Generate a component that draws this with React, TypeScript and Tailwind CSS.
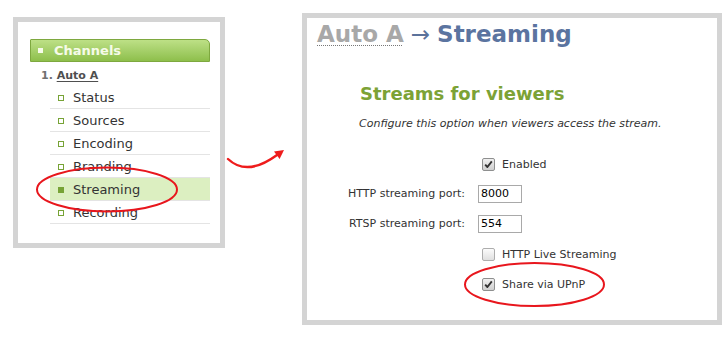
import React from "react";

const font = { fontFamily: '"DejaVu Sans", Verdana, sans-serif' };

const channelItems = ["Status", "Sources", "Encoding", "Branding", "Streaming", "Recording"];

const CheckBox = ({ checked }: { checked: boolean }) => (
  <span
    className={`ml-[4px] mr-[7px] flex h-[13px] w-[13px] items-center justify-center rounded-[2px] border ${
      checked ? "border-[#8e8f8f] bg-gradient-to-b from-[#f0f0f0] to-[#cfcfcf]" : "border-[#adadad] bg-gradient-to-b from-[#fbfbfb] to-[#e0e0e0]"
    }`}
  >
    {checked && (
      <svg width="9" height="9" viewBox="0 0 9 9">
        <path d="M1.2 4.6 L3.4 7 L7.8 1.4" fill="none" stroke="#333" strokeWidth="1.9" strokeLinejoin="round" />
      </svg>
    )}
  </span>
);

const ChannelsPanel = () => (
  <div className="mt-[17px] h-[231px] w-[212px] shrink-0 border-[5px] border-[#d4d4d4] bg-white">
    <div className="ml-[12px] mt-[17px] flex h-[23px] w-[180px] items-center rounded-tr-[5px] rounded-tl-[1px] border border-[#7ea83f] bg-gradient-to-b from-[#bde086] to-[#8ebf4b] pl-[7px]">
      <span className="mr-[11px] h-[5px] w-[5px] bg-[#f6fbe9]" />
      <span className="text-[13px] font-bold leading-none text-[#f6fbe9]">Channels</span>
    </div>
    <div className="ml-[23px] mt-[7px] text-[11px] font-bold leading-[14px]">
      <span className="text-[#707070]">1. </span>
      <span className="text-[#4f4f4f] underline underline-offset-[2px]">Auto A</span>
    </div>
    <ul className="ml-[32px] mt-[3px] w-[160px]">
      {channelItems.map((item) => {
        const active = item === "Streaming";
        return (
          <li
            key={item}
            className={`flex h-[23px] items-center border-b border-[#e4e4e4] pt-[2px] text-[13px] text-[#333] ${active ? "bg-[#dcefc1]" : ""}`}
          >
            <span
              className={`ml-[8px] mr-[9px] h-[6px] w-[6px] ${active ? "bg-[#77a336]" : "border border-[#77a336]"}`}
            />
            {item}
          </li>
        );
      })}
    </ul>
  </div>
);

const StreamingPanel = () => (
  <div className="mt-[13px] h-[312px] w-[420px] shrink-0 border-[5px] border-[#d4d4d4] bg-white">
    <div className="ml-[10px] mt-[2px] flex items-baseline text-[23px] leading-[28px] whitespace-nowrap">
      <span className="font-bold text-[#a8a8a8] underline decoration-dotted decoration-[#777] decoration-1 underline-offset-[3px]">
        Auto A
      </span>
      <span className="mx-[7px] text-[#5b729b]">→</span>
      <span className="font-bold text-[#5b74a0]">Streaming</span>
    </div>
    <div className="ml-[53px] mt-[35px] text-[18px] font-bold leading-[22px] text-[#7ca236]">Streams for viewers</div>
    <div className="ml-[52px] mt-[12px] text-[11px] italic leading-[14px] text-[#333]">
      Configure this option when viewers access the stream.
    </div>
    <div className="mt-[18px] grid grid-cols-[158px_1fr] gap-x-[13px] text-[11px] text-[#333]">
      <div />
      <div className="flex h-[30px] items-center">
        <CheckBox checked />
        <span className="mt-[3px]">Enabled</span>
      </div>
      <div className="flex h-[30px] items-center justify-end whitespace-nowrap">HTTP streaming port:</div>
      <div className="flex h-[30px] items-center">
        <div className="flex h-[18px] w-[44px] items-center border border-[#a9a9a9] pl-[2px] text-black">8000</div>
      </div>
      <div className="flex h-[30px] items-center justify-end whitespace-nowrap">RTSP streaming port:</div>
      <div className="flex h-[30px] items-center">
        <div className="flex h-[18px] w-[44px] items-center border border-[#a9a9a9] pl-[2px] text-black">554</div>
      </div>
      <div />
      <div className="flex h-[30px] items-center">
        <CheckBox checked={false} />
        <span className="mt-[3px]">HTTP Live Streaming</span>
      </div>
      <div />
      <div className="flex h-[30px] items-center">
        <CheckBox checked />
        <span className="mt-[3px]">Share via UPnP</span>
      </div>
    </div>
  </div>
);

export default function App() {
  return (
    <div className="relative flex h-[345px] w-[728px] items-start overflow-hidden bg-white pl-[13px]" style={font}>
      <ChannelsPanel />
      {/* curved arrow between the two panels */}
      <svg className="mt-[146px] shrink-0" width="77" height="30" viewBox="0 0 77 30">
        <path d="M3 13 Q22 31 52 9" fill="none" stroke="#ee1c1c" strokeWidth="2.4" strokeLinecap="round" />
        <polygon points="59,4 54.6,13 49,5.5" fill="#ee1c1c" />
      </svg>
      <StreamingPanel />
      {/* hand-drawn highlight ellipses */}
      <svg className="pointer-events-none absolute left-0 top-0" width="728" height="345">
        <ellipse cx="107" cy="189.5" rx="70" ry="22" fill="none" stroke="#e8161d" strokeWidth="2" />
        <ellipse cx="534.5" cy="284.5" rx="69.5" ry="21.5" fill="none" stroke="#e8161d" strokeWidth="2" />
      </svg>
    </div>
  );
}
